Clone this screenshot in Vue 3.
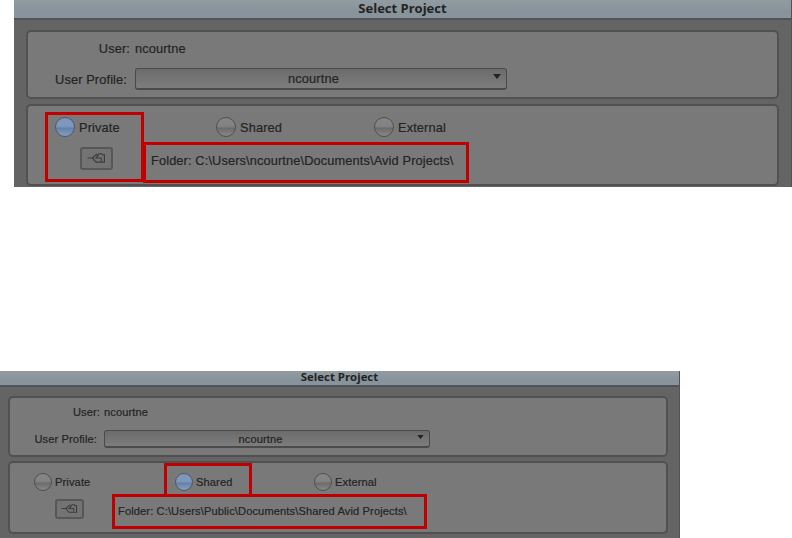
<template>
  <div class="page">
    <section v-for="d in dialogs" :key="d.id" class="dialog" :class="d.id">
      <header class="title-bar"><span class="title">Select Project</span></header>

      <div class="group profile-group">
        <div class="row user-row">
          <span class="label">User:</span>
          <span class="user">ncourtne</span>
        </div>
        <div class="row profile-row">
          <span class="label">User Profile:</span>
          <div class="select">
            <span class="selected">ncourtne</span>
            <svg class="arrow" viewBox="0 0 8 5"><path d="M0 0H8L4 5Z" fill="#222" /></svg>
          </div>
        </div>
      </div>

      <div class="group location-group">
        <div class="radios">
          <div v-for="name in locations" :key="name" class="radio">
            <span class="dot" :class="{ checked: name === d.location }"></span>
            <span class="name">{{ name }}</span>
          </div>
        </div>
        <div class="folder-row">
          <div class="browse">
            <svg viewBox="0 0 18 12" fill="none" stroke="#3c3c3c" stroke-width="1.1">
              <path d="M0.5 5.5H6.5M5 5.5L9 2L10.5 3.5L8.5 5.5H13.5V8.5M5 5.5L8.5 9.5H16.5V2.5H15L14 1.5H11.5L10.5 3" />
            </svg>
          </div>
          <span class="path">{{ d.path }}</span>
        </div>
      </div>

      <div class="mark mark-radio"></div>
      <div class="mark mark-path"></div>
    </section>
  </div>
</template>

<script setup>
const locations = ['Private', 'Shared', 'External']

const dialogs = [
  {
    id: 'large',
    location: 'Private',
    path: 'Folder: C:\\Users\\ncourtne\\Documents\\Avid Projects\\',
  },
  {
    id: 'small',
    location: 'Shared',
    path: 'Folder: C:\\Users\\Public\\Documents\\Shared Avid Projects\\',
  },
]
</script>

<style>
body {
  margin: 0;
  background: #fff;
}
</style>

<style scoped>
.page {
  display: flex;
  flex-direction: column;
  gap: 184px;
  width: 792px;
  height: 538px;
  overflow: hidden;
  font-family: "Liberation Sans", Arial, sans-serif;
  color: #242424;
}

.dialog {
  position: relative;
  flex-shrink: 0;
  background: #646464;
  border-right: 1px solid #505359;
  white-space: nowrap;
  -webkit-text-stroke: 0.2px #242424;
}

.dialog *,
.dialog {
  box-sizing: border-box;
}

.large {
  width: 778px;
  height: 187px;
  margin-left: 14px;
  font-size: 12.8px;
  letter-spacing: 0.12px;
}

.small {
  width: 680px;
  height: 167px;
  font-size: 11.1px;
  letter-spacing: 0.12px;
}

.title-bar {
  display: flex;
  justify-content: center;
  align-items: center;
  background: linear-gradient(#929ba0, #87929c 70%, #8b949b);
  border-bottom: 2px solid #50545a;
  font-family: "Open Sans", sans-serif;
  font-weight: 700;
  -webkit-text-stroke: 0;
}

.large .title-bar {
  height: 20px;
  padding-bottom: 3px;
  font-size: 13px;
  letter-spacing: 0;
}

.small .title-bar {
  height: 16px;
  padding-bottom: 3px;
  font-size: 11.4px;
  letter-spacing: 0;
}

.group {
  display: flex;
  flex-direction: column;
  background: #797979;
  border: 2px solid #515151;
  border-radius: 5px;
}

.large .group {
  width: 753px;
  margin-left: 12px;
}

.small .group {
  width: 660px;
  margin-left: 8px;
}

.large .profile-group {
  height: 69px;
  margin-top: 10px;
  padding-top: 6px;
  gap: 10px;
}

.small .profile-group {
  height: 61px;
  margin-top: 9px;
  padding-top: 4px;
  gap: 8px;
}

.large .location-group {
  height: 82px;
  margin-top: 5px;
  padding-top: 11px;
}

.small .location-group {
  height: 73px;
  margin-top: 4px;
  padding-top: 10px;
}

.row {
  display: flex;
  align-items: center;
}

.user-row {
  height: 20px;
}

.label {
  text-align: right;
}

.large .label {
  width: 99px;
  margin-right: 8px;
}

.small .label {
  width: 87px;
  margin-right: 7px;
}

.large .user-row .label {
  width: 102px;
  margin-right: 5px;
}

.small .user-row .label {
  width: 90px;
  margin-right: 4px;
}

.select {
  display: flex;
  position: relative;
  align-items: center;
  justify-content: center;
  background: linear-gradient(#6b6b6b, #7d7d7d);
  border: 1px solid #4b4b4b;
  border-bottom-width: 2px;
  border-radius: 3px;
}

.large .select {
  width: 372px;
  height: 22px;
  padding-right: 15px;
}

.small .select {
  width: 326px;
  height: 18px;
  padding-right: 13px;
}

.arrow {
  position: absolute;
  right: 5px;
  top: 5px;
  width: 8px;
  height: 5px;
}

.small .arrow {
  top: 4px;
  width: 7px;
  height: 4px;
}

.radios {
  display: grid;
}

.large .radios {
  grid-template-columns: 161px 158px 100px;
  margin-left: 27px;
}

.small .radios {
  grid-template-columns: 141px 139px 100px;
  margin-left: 24px;
}

.radio {
  display: flex;
  align-items: center;
}

.dot {
  border: 1px solid #505050;
  border-radius: 50%;
  background: linear-gradient(#868686, #828282 45%, #6c6c6c 58%, #888);
}

.dot.checked {
  border-color: #4b596b;
  background: linear-gradient(#7f96b6, #7e98bc 45%, #6681a9 58%, #88a0bc);
}

.large .dot {
  width: 20px;
  height: 20px;
  margin-right: 4px;
}

.small .dot {
  width: 18px;
  height: 18px;
  margin-right: 3px;
}

.folder-row {
  display: flex;
  align-items: center;
}

.large .folder-row {
  margin: 10px 0 0 52px;
}

.small .folder-row {
  margin: 8px 0 0 45px;
}

.browse {
  display: flex;
  align-items: center;
  justify-content: center;
  background: #737373;
  border: 2px solid #575757;
  border-radius: 3px;
}

.large .browse {
  width: 33px;
  height: 23px;
  margin-right: 38px;
}

.small .browse {
  width: 29px;
  height: 20px;
  margin-right: 34px;
}

.browse svg {
  flex-shrink: 0;
}

.large .browse svg {
  width: 19px;
  height: 13px;
}

.small .browse svg {
  width: 17px;
  height: 12px;
}

.path {
  padding-top: 4px;
}

.mark {
  position: absolute;
  border: 3px solid #c00000;
}

.large .mark-radio {
  left: 31px;
  top: 112px;
  width: 99px;
  height: 70px;
}

.large .mark-path {
  left: 129px;
  top: 142px;
  width: 326px;
  height: 41px;
}

.small .mark-radio {
  left: 164px;
  top: 92px;
  width: 88px;
  height: 34px;
}

.small .mark-path {
  left: 112px;
  top: 123px;
  width: 315px;
  height: 35px;
}
</style>
